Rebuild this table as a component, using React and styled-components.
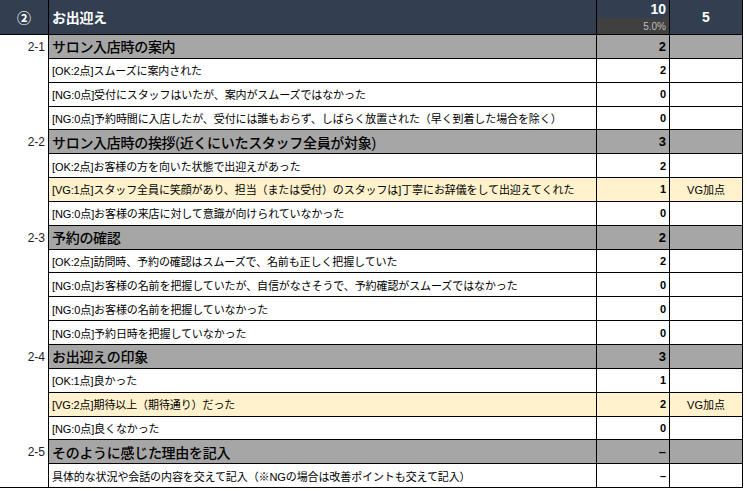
import React from 'react'
import styled, { createGlobalStyle } from 'styled-components'

const GlobalStyle = createGlobalStyle`
    html, body {
        margin: 0;
        padding: 0;
        background: #fff;
    }
    body {
        font-family: "Liberation Sans", "Noto Sans CJK JP", sans-serif;
        color: #111;
    }
`;

const Sheet = styled.div`
    width: 743px;
    display: grid;
    grid-template-columns: 49px 548px 73px 73px;
`;

const Cell = styled.div`
    box-sizing: border-box;
    height: ${p => p.$head ? '35px' : '23.85px'};
    border-right: 1px solid #000;
    border-bottom: ${p => p.$noBottom ? 'none' : '1px solid #000'};
    background: ${p => p.$bg || '#fff'};
    display: flex;
    align-items: center;
    overflow: hidden;
    white-space: nowrap;
`;

const HeadCell = styled(Cell)`
    background: #333f50;
    color: #fff;
    font-weight: bold;
`;

const Circle = styled(HeadCell)`
    justify-content: center;
    font-size: 14px;
`;

const HeadTitle = styled(HeadCell)`
    padding-left: 3px;
    font-size: 14px;
    letter-spacing: -0.3px;
`;

const HeadScore = styled(HeadCell)`
    flex-direction: column;
    align-items: stretch;
`;

const HeadTop = styled.div`
    flex: 1;
    display: flex;
    align-items: center;
    justify-content: flex-end;
    padding-right: 3px;
    font-family: "Liberation Sans Narrow", "Liberation Sans", sans-serif;
    font-size: 14px;
`;

const HeadRate = styled.div`
    height: 16px;
    background: #404040;
    color: #bfbfbf;
    font-family: "Liberation Sans Narrow", "Liberation Sans", sans-serif;
    font-weight: normal;
    font-size: 10px;
    display: flex;
    align-items: center;
    justify-content: flex-end;
    padding-right: 3px;
`;

const HeadPoint = styled(HeadCell)`
    justify-content: center;
    font-family: "Liberation Sans Narrow", "Liberation Sans", sans-serif;
    font-size: 14px;
`;

const NoCell = styled(Cell)`
    justify-content: flex-end;
    padding-right: 3px;
    font-family: "Liberation Sans Narrow", "Liberation Sans", sans-serif;
    font-size: 12px;
    color: #1c1c2c;
`;

const Title = styled(Cell)`
    padding-left: 3px;
    font-size: ${p => p.$section ? '14px' : '11px'};
    font-weight: ${p => p.$section ? 500 : 'normal'};
    letter-spacing: ${p => p.$section ? '-0.3px' : '-0.1px'};
    color: #000;
`;

const Score = styled(Cell)`
    justify-content: flex-end;
    padding-right: 3px;
    font-family: "Liberation Sans Narrow", "Liberation Sans", sans-serif;
    font-size: ${p => p.$section ? '13px' : '11px'};
    font-weight: bold;
    color: #000;
`;

const Note = styled(Cell)`
    justify-content: center;
    font-size: 11px;
    color: #000;
`;

const sections = [
    {
        no: '2-1', title: 'サロン入店時の案内', score: '2',
        items: [
            { t: '[OK:2点]スムーズに案内された', s: '2' },
            { t: '[NG:0点]受付にスタッフはいたが、案内がスムーズではなかった', s: '0' },
            { t: '[NG:0点]予約時間に入店したが、受付には誰もおらず、しばらく放置された（早く到着した場合を除く）', s: '0' },
        ]
    },
    {
        no: '2-2', title: 'サロン入店時の挨拶(近くにいたスタッフ全員が対象)', score: '3',
        items: [
            { t: '[OK:2点]お客様の方を向いた状態で出迎えがあった', s: '2' },
            { t: '[VG:1点]スタッフ全員に笑顔があり、担当（または受付）のスタッフは]丁寧にお辞儀をして出迎えてくれた', s: '1', vg: true },
            { t: '[NG:0点]お客様の来店に対して意識が向けられていなかった', s: '0' },
        ]
    },
    {
        no: '2-3', title: '予約の確認', score: '2',
        items: [
            { t: '[OK:2点]訪問時、予約の確認はスムーズで、名前も正しく把握していた', s: '2' },
            { t: '[NG:0点]お客様の名前を把握していたが、自信がなさそうで、予約確認がスムーズではなかった', s: '0' },
            { t: '[NG:0点]お客様の名前を把握していなかった', s: '0' },
            { t: '[NG:0点]予約日時を把握していなかった', s: '0' },
        ]
    },
    {
        no: '2-4', title: 'お出迎えの印象', score: '3',
        items: [
            { t: '[OK:1点]良かった', s: '1' },
            { t: '[VG:2点]期待以上（期待通り）だった', s: '2', vg: true },
            { t: '[NG:0点]良くなかった', s: '0' },
        ]
    },
    {
        no: '2-5', title: 'そのように感じた理由を記入', score: '–',
        items: [
            { t: '具体的な状況や会話の内容を交えて記入（※NGの場合は改善ポイントも交えて記入）', s: '–' },
        ]
    },
];

const GRAY = '#a6a6a6';
const VG = '#fff2cc';

const App = () => {
    return (
        <>
            <GlobalStyle />
            <Sheet>
                <Circle $head>②</Circle>
                <HeadTitle $head>お出迎え</HeadTitle>
                <HeadScore $head>
                    <HeadTop>10</HeadTop>
                    <HeadRate>5.0%</HeadRate>
                </HeadScore>
                <HeadPoint $head>5</HeadPoint>

                {sections.map((sec, si) => {
                    const last = si === sections.length - 1;
                    return (
                        <React.Fragment key={sec.no}>
                            <NoCell $noBottom>{sec.no}</NoCell>
                            <Title $section $bg={GRAY}>{sec.title}</Title>
                            <Score $section $bg={GRAY}>{sec.score}</Score>
                            <Cell $bg={GRAY} />
                            {sec.items.map((it, ii) => (
                                <React.Fragment key={ii}>
                                    <NoCell $noBottom={!(last && ii === sec.items.length - 1)} />
                                    <Title $bg={it.vg ? VG : '#fff'}>{it.t}</Title>
                                    <Score $bg={it.vg ? VG : '#fff'}>{it.s}</Score>
                                    <Note $bg={it.vg ? VG : '#fff'}>{it.vg ? 'VG加点' : ''}</Note>
                                </React.Fragment>
                            ))}
                        </React.Fragment>
                    )
                })}
            </Sheet>
        </>
    )
}

export default App
